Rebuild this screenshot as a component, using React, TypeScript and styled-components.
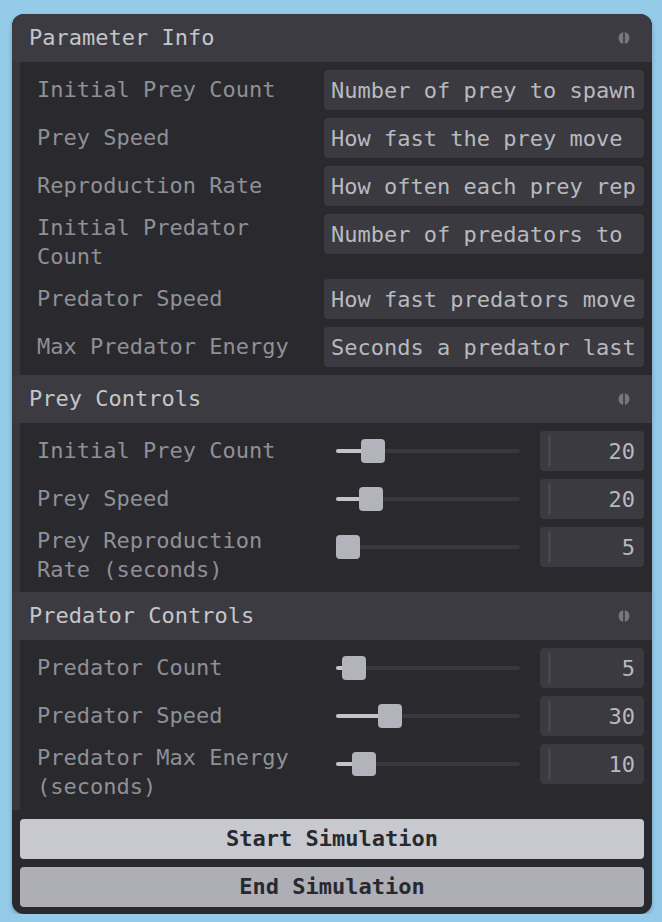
import * as React from 'react';
import styled, { createGlobalStyle } from 'styled-components';

const GlobalStyle = createGlobalStyle`
  html, body {
    margin: 0;
    padding: 0;
    background: #94cbe9;
  }
  body {
    font-family: 'DejaVu Sans Mono', 'Liberation Mono', monospace;
    font-size: 22px;
  }
`;

const Pane = styled.div`
  margin: 14px 0 0 12px;
  width: 640px;
  background: #29292e;
  border-radius: 12px;
  overflow: hidden;
  box-shadow: 0 2px 4px rgba(0, 0, 0, 0.25);
  padding-bottom: 7px;
`;

const FolderTitle = styled.div`
  height: 48px;
  background: #3b3b41;
  display: flex;
  align-items: center;
  justify-content: space-between;
  padding: 0 22px 0 17px;
  color: #c5c6cb;
  line-height: 1;
`;

const FoldMark = styled.svg`
  display: block;
`;

const FolderBody = styled.div`
  border-left: 8px solid #37373d;
  padding: 8px;
  display: flex;
  flex-direction: column;
  gap: 8px;
`;

const Row = styled.div`
  display: grid;
  grid-template-columns: 296px 320px;
  align-items: start;
  min-height: 40px;
`;

const Label = styled.div`
  padding-left: 9px;
  color: #8f9096;
  line-height: 28.6px;
  min-height: 40px;
  display: flex;
  align-items: center;
`;

const TextMonitor = styled.div`
  height: 40px;
  box-sizing: border-box;
  background: #3a3a40;
  border-radius: 4px;
  padding: 0 7px;
  display: flex;
  align-items: center;
  color: #b8b9bf;
`;

const Clip = styled.div`
  width: 100%;
  overflow: hidden;
  white-space: nowrap;
`;

const SliderGroup = styled.div`
  display: flex;
  gap: 8px;
  height: 40px;
`;

const SliderArea = styled.div`
  width: 208px;
  padding: 0 12px;
  box-sizing: border-box;
  display: flex;
  align-items: center;
`;

const Track = styled.div`
  position: relative;
  width: 100%;
  height: 4px;
  border-radius: 2px;
  background: #38393f;
`;

const Fill = styled.div`
  position: absolute;
  left: 0;
  top: 0;
  height: 4px;
  border-radius: 2px;
  background: #c3c4c8;
`;

const Knob = styled.div`
  position: absolute;
  top: -10px;
  width: 24px;
  height: 24px;
  margin-left: -12px;
  border-radius: 4px;
  background: #b3b4bb;
`;

const NumberBox = styled.div`
  position: relative;
  width: 104px;
  height: 40px;
  box-sizing: border-box;
  background: #3a3a40;
  border-radius: 4px;
  padding: 0 9px 0 20px;
  display: flex;
  align-items: center;
  justify-content: flex-end;
  color: #b8b9bf;

  &::before {
    content: '';
    position: absolute;
    left: 8px;
    top: 4px;
    bottom: 4px;
    width: 3px;
    border-radius: 2px;
    background: #47484e;
  }
`;

const Buttons = styled.div`
  padding: 9px 8px 0 8px;
  display: flex;
  flex-direction: column;
  gap: 8px;
`;

const Button = styled.button<{ $light?: boolean }>`
  height: 40px;
  border: none;
  border-radius: 4px;
  background: ${(p) => (p.$light ? '#c8c9ce' : '#adaeb6')};
  color: #28292e;
  font-family: 'DejaVu Sans Mono', 'Liberation Mono', monospace;
  font-size: 22px;
  font-weight: bold;
  padding: 0;
  cursor: pointer;
`;

function Folder({ title, children }: { title: string; children: React.ReactNode }) {
  return (
    <>
      <FolderTitle>
        <span>{title}</span>
        <FoldMark width="12" height="12" viewBox="0 0 12 12">
          <ellipse cx="6" cy="6" rx="5.5" ry="6" fill="#76777d" />
          <rect x="5.2" y="0" width="1.6" height="12" fill="#3b3b41" />
        </FoldMark>
      </FolderTitle>
      <FolderBody>{children}</FolderBody>
    </>
  );
}

function InfoRow({ label, text }: { label: React.ReactNode; text: string }) {
  return (
    <Row>
      <Label>{label}</Label>
      <TextMonitor>
        <Clip>{text}</Clip>
      </TextMonitor>
    </Row>
  );
}

// knob centre travels from 12px to (track - 12px)
function SliderRow({ label, value, ratio }: { label: React.ReactNode; value: number; ratio: number }) {
  const pos = `calc(12px + ${ratio} * (100% - 24px))`;
  return (
    <Row>
      <Label>{label}</Label>
      <SliderGroup>
        <SliderArea>
          <Track>
            <Fill style={{ width: pos }} />
            <Knob style={{ left: pos }} />
          </Track>
        </SliderArea>
        <NumberBox>{value}</NumberBox>
      </SliderGroup>
    </Row>
  );
}

export default function App() {
  return (
    <>
      <GlobalStyle />
      <Pane>
        <Folder title="Parameter Info">
          <InfoRow label="Initial Prey Count" text="Number of prey to spawn" />
          <InfoRow label="Prey Speed" text="How fast the prey move" />
          <InfoRow label="Reproduction Rate" text="How often each prey reproduces" />
          <InfoRow label={<>Initial Predator<br />Count</>} text="Number of predators to spawn" />
          <InfoRow label="Predator Speed" text="How fast predators move" />
          <InfoRow label="Max Predator Energy" text="Seconds a predator lasts without food" />
        </Folder>
        <Folder title="Prey Controls">
          <SliderRow label="Initial Prey Count" value={20} ratio={0.156} />
          <SliderRow label="Prey Speed" value={20} ratio={0.144} />
          <SliderRow label={<>Prey Reproduction<br />Rate (seconds)</>} value={5} ratio={0} />
        </Folder>
        <Folder title="Predator Controls">
          <SliderRow label="Predator Count" value={5} ratio={0.0375} />
          <SliderRow label="Predator Speed" value={30} ratio={0.26} />
          <SliderRow label={<>Predator Max Energy<br />(seconds)</>} value={10} ratio={0.1} />
        </Folder>
        <Buttons>
          <Button $light>Start Simulation</Button>
          <Button>End Simulation</Button>
        </Buttons>
      </Pane>
    </>
  );
}
